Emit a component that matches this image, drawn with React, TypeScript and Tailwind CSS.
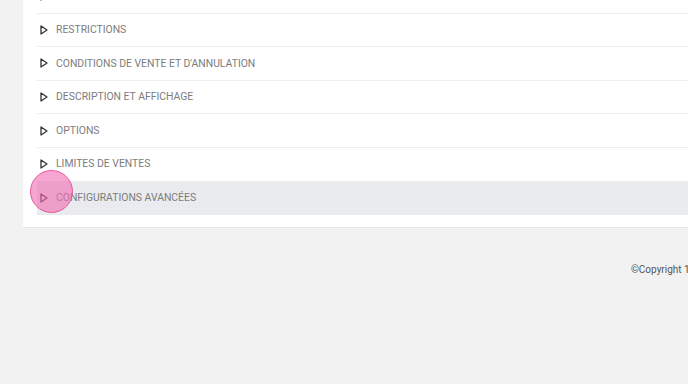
import React from 'react';

const sections = [
    'TARIFS ET QUANTITÉS',
    'RESTRICTIONS',
    "CONDITIONS DE VENTE ET D'ANNULATION",
    'DESCRIPTION ET AFFICHAGE',
    'OPTIONS',
    'LIMITES DE VENTES',
    'CONFIGURATIONS AVANCÉES',
];

function Caret() {
    return (
        <svg width="8" height="10" viewBox="0 0 8 10" className="flex-shrink-0">
            <path d="M1 1 L7 5 L1 9 Z" fill="none" stroke="#333" strokeWidth="1.3" strokeLinejoin="round" />
        </svg>
    );
}

export default function App() {
    return (
        <div
            className="relative w-[688px] h-[384px] overflow-hidden bg-[#f2f2f2]"
            style={{ fontFamily: 'Roboto, "Liberation Sans", sans-serif' }}
        >
            <div className="ml-[23px] -mt-[20px] bg-white border-b border-[#e6e6e6] pl-[14px] pb-[12px]">
                {sections.map((label, i) => {
                    const last = i === sections.length - 1;
                    return (
                        <div
                            key={label}
                            className={
                                last
                                    ? 'flex items-center gap-[8px] h-[33px] pl-[3px] bg-[#e9ebee]'
                                    : 'flex items-center gap-[8px] h-[33.6px] pl-[3px] border-b border-[#ededed]'
                            }
                        >
                            <Caret />
                            <span className="text-[10.4px] text-[#7c7c7c] whitespace-nowrap">{label}</span>
                        </div>
                    );
                })}
            </div>
            <div className="mt-[34px] pl-[631px] whitespace-nowrap text-[10px] text-[#555]">
                ©Copyright 1998-2024
            </div>
            <div className="absolute left-[30px] top-[170px] w-[43px] h-[43px] rounded-full bg-[#f06ab0]/60 border-[1.5px] border-[#e6569e]" />
        </div>
    );
}
